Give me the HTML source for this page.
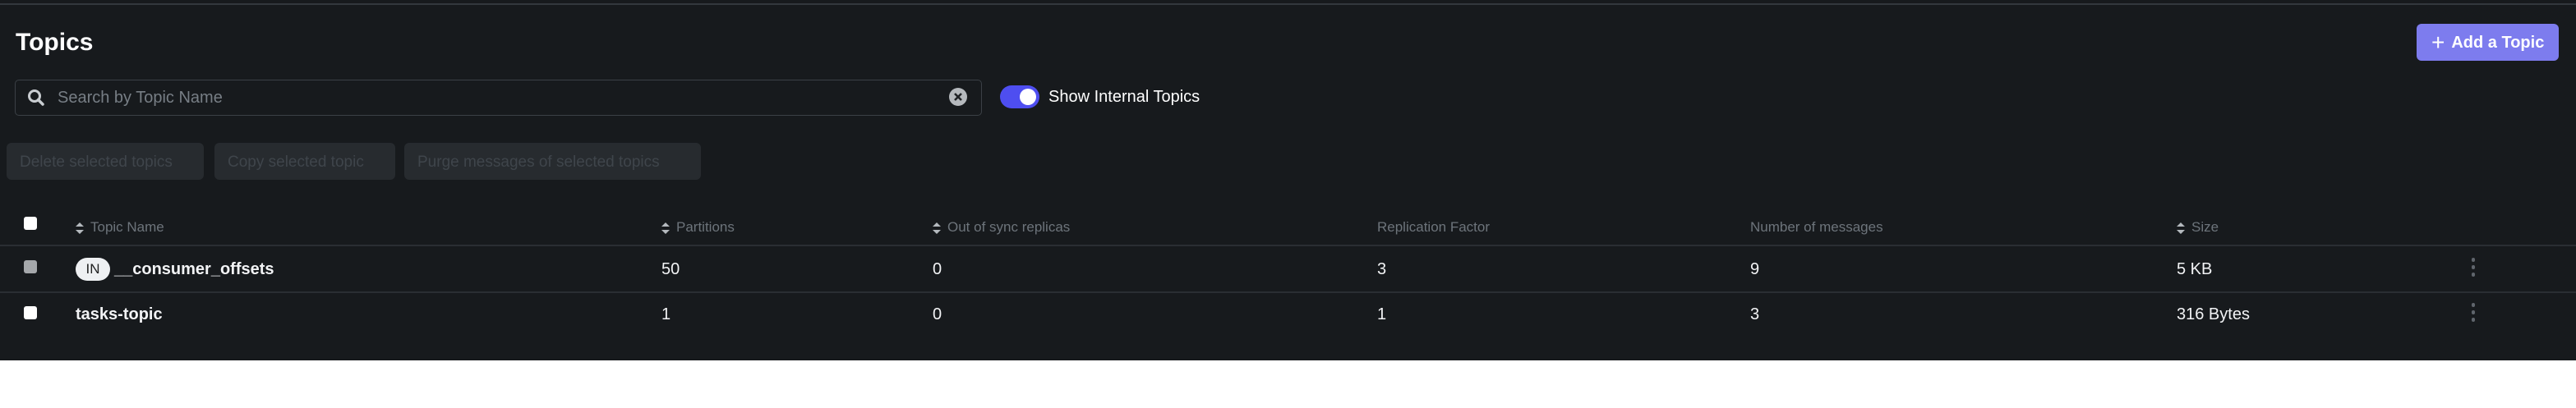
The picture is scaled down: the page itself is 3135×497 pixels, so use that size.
<!DOCTYPE html>
<html><head><style>
*{margin:0;padding:0;box-sizing:border-box}
body{width:3135px;height:497px;background:#fff;font-family:"Liberation Sans",sans-serif;position:relative;overflow:hidden}
#d{position:absolute;left:0;top:0;width:3135px;height:439px;background:#171a1d}
.a{position:absolute;white-space:nowrap}
.btn{position:absolute;top:174px;height:45px;background:#272b2f;border-radius:6px;color:#3f454b;font-size:19px;line-height:47px;padding-left:16px}
.h{position:absolute;top:266px;color:#6d747b;font-size:17px;line-height:22px}
.v{position:absolute;color:#f2f3f5;font-size:20px;line-height:24px}
.s{display:inline-block;width:10px;vertical-align:middle;margin-right:8px}
.cb{position:absolute;left:29px;width:16px;height:16px;border-radius:3px;background:#fff}
.line{position:absolute;left:0;width:3135px;height:2px;background:#2a2e33}
.k{position:absolute;left:3008px;width:4px}
.k i{display:block;width:4px;height:5px;border-radius:2px;background:#5f656c;margin-bottom:4px}
</style></head><body>
<div id="d">
<div class="a" style="left:0;top:4px;width:3135px;height:2px;background:#33383d"></div>
<div class="a" style="left:19px;top:35px;color:#fff;font-size:30px;font-weight:600">Topics</div>
<div class="a" style="left:2941px;top:29px;width:173px;height:45px;background:#7d7cee;border-radius:6px;color:#fff;font-size:20px;line-height:45px;padding-left:18px;font-weight:600"><span style="font-size:28px;font-weight:400;vertical-align:-3px;margin-right:8px">+</span>Add a Topic</div>
<div class="a" style="left:18px;top:97px;width:1177px;height:44px;border:1px solid #3b4046;border-radius:5px"></div>
<svg class="a" style="left:33px;top:108px" width="22" height="22" viewBox="0 0 22 22"><circle cx="9" cy="9" r="6.5" fill="none" stroke="#c9cdd1" stroke-width="3"/><path d="M13.5 13.5 L19 19" stroke="#c9cdd1" stroke-width="3.5" stroke-linecap="round"/></svg>
<div class="a" style="left:70px;top:107px;color:#777e85;font-size:20px;line-height:24px">Search by Topic Name</div>
<svg class="a" style="left:1155px;top:107px" width="22" height="22"><circle cx="11" cy="11" r="11" fill="#b5b9bd"/><path d="M7 7L15 15M15 7L7 15" stroke="#202326" stroke-width="2.6"/></svg>
<div class="a" style="left:1217px;top:104px;width:48px;height:28px;border-radius:14px;background:#4e4ef0"></div>
<div class="a" style="left:1241px;top:108px;width:20px;height:20px;border-radius:10px;background:#fff"></div>
<div class="a" style="left:1276px;top:106px;color:#fff;font-size:20px;line-height:24px">Show Internal Topics</div>
<div class="btn" style="left:8px;width:240px">Delete selected topics</div>
<div class="btn" style="left:261px;width:220px">Copy selected topic</div>
<div class="btn" style="left:492px;width:361px">Purge messages of selected topics</div>
<div class="cb" style="top:264px"></div>
<svg width="0" height="0" style="position:absolute"><defs><symbol id="so" viewBox="0 0 10 14"><path d="M5 0L10 5H0Z M5 14L10 9H0Z" fill="#b4b9be"/></symbol></defs></svg>
<div class="h" style="left:92px"><svg class="s" height="14"><use href="#so"/></svg>Topic Name</div>
<div class="h" style="left:805px"><svg class="s" height="14"><use href="#so"/></svg>Partitions</div>
<div class="h" style="left:1135px"><svg class="s" height="14"><use href="#so"/></svg>Out of sync replicas</div>
<div class="h" style="left:1676px">Replication Factor</div>
<div class="h" style="left:2130px">Number of messages</div>
<div class="h" style="left:2649px"><svg class="s" height="14"><use href="#so"/></svg>Size</div>
<div class="line" style="top:298px"></div>
<div class="cb" style="top:317px;background:#a5a8ab"></div>
<div class="a" style="left:92px;top:314px;width:42px;height:28px;border-radius:14px;background:#eef0f2;color:#222;font-size:17px;line-height:28px;text-align:center">IN</div>
<div class="v" style="left:139px;top:316px;font-weight:600">__consumer_offsets</div>
<div class="v" style="left:805px;top:316px">50</div>
<div class="v" style="left:1135px;top:316px">0</div>
<div class="v" style="left:1676px;top:316px">3</div>
<div class="v" style="left:2130px;top:316px">9</div>
<div class="v" style="left:2649px;top:316px">5 KB</div>
<div class="k" style="top:314px"><i></i><i></i><i></i></div>
<div class="line" style="top:355px"></div>
<div class="cb" style="top:373px"></div>
<div class="v" style="left:92px;top:371px;font-weight:600">tasks-topic</div>
<div class="v" style="left:805px;top:371px">1</div>
<div class="v" style="left:1135px;top:371px">0</div>
<div class="v" style="left:1676px;top:371px">1</div>
<div class="v" style="left:2130px;top:371px">3</div>
<div class="v" style="left:2649px;top:371px">316 Bytes</div>
<div class="k" style="top:369px"><i></i><i></i><i></i></div>
</div>
</body></html>
